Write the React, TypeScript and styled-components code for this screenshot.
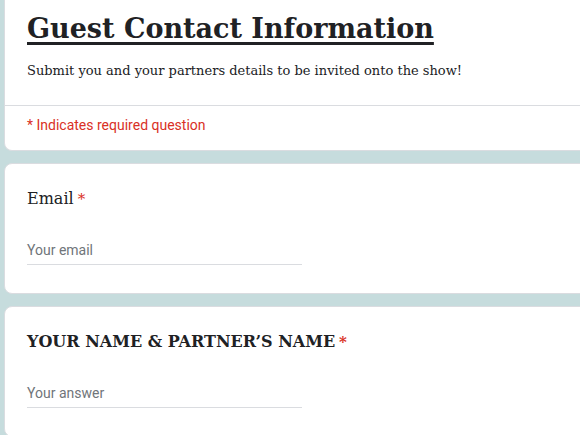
import * as React from 'react';
import styled, { createGlobalStyle } from 'styled-components';

const pageColor = '#c6dcdd';
const borderColor = '#dadce0';
const requiredColor = '#d93025';

const GlobalStyle = createGlobalStyle`
  html, body {
    margin: 0;
    padding: 0;
    background: ${pageColor};
    overflow: hidden;
  }
`;

const Page = styled.div`
  width: 700px;
  padding-left: 4px;
  display: flex;
  flex-direction: column;
  gap: 12px;
`;

const Card = styled.div<{ $cutTop?: boolean }>`
  background: #fff;
  border: 1px solid ${borderColor};
  border-radius: 8px;
  ${props => props.$cutTop && `
    border-top: none;
    border-top-left-radius: 0;
    border-top-right-radius: 0;
  `}
`;

const Header = styled.div`
  padding: 9px 22px 24px;
`;

const Title = styled.h1`
  margin: 0;
  font-family: 'DejaVu Serif', Georgia, serif;
  font-size: 27px;
  line-height: 40px;
  font-weight: 700;
  color: #202124;
  text-decoration: underline;
  text-underline-offset: 4px;
  text-decoration-thickness: 3px;
`;

const Description = styled.p`
  margin: 12px 0 0;
  font-family: 'DejaVu Serif', Georgia, serif;
  font-size: 13px;
  line-height: 20px;
  color: #202124;
`;

const Divider = styled.div`
  border-top: 1px solid ${borderColor};
`;

const RequiredNote = styled.div`
  padding: 9px 22px 15px;
  font-family: Roboto, 'Liberation Sans', sans-serif;
  font-size: 14px;
  line-height: 20px;
  color: ${requiredColor};
`;

const Question = styled.div`
  padding: 23px 22px 28px;
`;

const Label = styled.div<{ $caps?: boolean }>`
  font-family: 'DejaVu Serif', Georgia, serif;
  font-size: 16px;
  font-weight: ${props => (props.$caps ? 700 : 400)};
  line-height: 24px;
  color: #202124;
`;

const Star = styled.span`
  color: ${requiredColor};
  font-size: 15px;
  padding-left: 4px;
  vertical-align: top;
`;

const Answer = styled.div`
  margin-top: 29px;
  width: 275px;
  padding-bottom: 4px;
  border-bottom: 1px solid ${borderColor};
  font-family: Roboto, 'Liberation Sans', sans-serif;
  font-size: 14px;
  line-height: 20px;
  color: #70757a;
`;

const App = () => (
  <>
    <GlobalStyle />
    <Page>
      <Card $cutTop>
        <Header>
          <Title>Guest Contact Information</Title>
          <Description>Submit you and your partners details to be invited onto the show!</Description>
        </Header>
        <Divider />
        <RequiredNote>* Indicates required question</RequiredNote>
      </Card>
      <Card>
        <Question>
          <Label>Email<Star>*</Star></Label>
          <Answer>Your email</Answer>
        </Question>
      </Card>
      <Card>
        <Question>
          <Label $caps>YOUR NAME &amp; PARTNER’S NAME<Star>*</Star></Label>
          <Answer>Your answer</Answer>
        </Question>
      </Card>
    </Page>
  </>
);

export default App;
